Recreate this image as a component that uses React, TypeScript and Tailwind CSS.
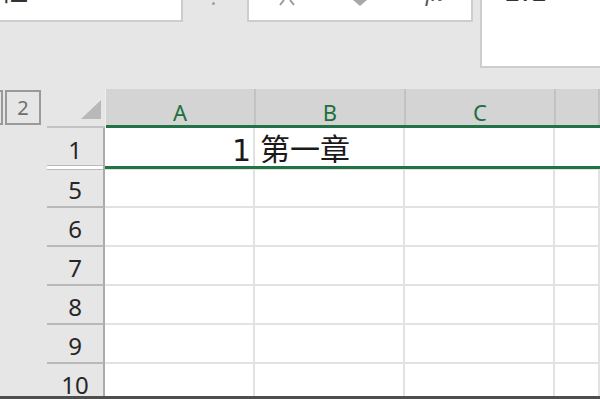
import React from "react";

const columnas = [
  { letra: "A", ancho: "w-[150px]" },
  { letra: "B", ancho: "w-[150px]" },
  { letra: "C", ancho: "w-[150px]" },
  { letra: "", ancho: "flex-1" },
];

const filas = [
  { n: "5", alto: "h-[38px]" },
  { n: "6", alto: "h-[39px]" },
  { n: "7", alto: "h-[39px]" },
  { n: "8", alto: "h-[39px]" },
  { n: "9", alto: "h-[39px]" },
  { n: "10", alto: "h-[39px]" },
];

const fuenteCabecera = { fontFamily: '"Noto Sans", "Open Sans", sans-serif' };
const fuenteCelda = { fontFamily: '"DejaVu Sans", "Noto Sans CJK SC", sans-serif' };

const App: React.FC = () => {
  return (
    <div className="w-[600px] h-[399px] overflow-hidden flex flex-col bg-[#e6e6e6]">
      {/* Barra de fórmulas (cortada arriba) */}
      <div className="h-[89px] shrink-0 flex items-start">
        <div className="w-[183px] h-[22px] bg-white border-r-2 border-b-2 border-[#cdcdcd] overflow-hidden">
          <div
            className="-mt-[25px] text-[28px] leading-[28px] text-[#333]"
            style={{ fontFamily: '"Noto Sans CJK SC", sans-serif' }}
          >
            框
          </div>
        </div>
        <div className="ml-[29px] mt-[2px] w-[3px] h-[3px] rounded-full bg-[#a0a0a0]" />
        <div className="ml-[32px] w-[226px] h-[22px] bg-white border-x-2 border-b-2 border-[#cdcdcd] overflow-hidden flex items-start">
          <svg width="16" height="6" viewBox="0 0 16 6" className="ml-[30px]">
            <path d="M5 0 L1 5 M11 0 L15 5" stroke="#9a9a9a" strokeWidth="2" fill="none" />
          </svg>
          <svg width="18" height="7" viewBox="0 0 18 7" className="ml-[56px]">
            <path d="M2 0 L9 6 L16 0 Z" fill="#a8a8a8" />
          </svg>
          <div
            className="ml-[56px] -mt-[20px] text-[24px] leading-[26px] italic text-[#555]"
            style={{ fontFamily: '"Liberation Serif", serif' }}
          >
            fx
          </div>
        </div>
        <div className="ml-[7px] flex-1 h-[68px] bg-white border-l-2 border-b-2 border-[#cdcdcd] overflow-hidden">
          <div className="ml-[21px] -mt-[22px] text-[28px] leading-[28px] text-[#333]" style={fuenteCelda}>
            1.1
          </div>
        </div>
      </div>

      {/* Cabecera de columnas */}
      <div className="h-[39px] shrink-0 flex">
        <div className="w-[47px] flex items-start pt-[1px]">
          <div className="w-[3px] h-[35px] border-y-2 border-r-2 border-[#9a9a9a]" />
          <div
            className="ml-[2px] w-[36px] h-[35px] border-2 border-[#9a9a9a] flex items-center justify-center text-[20px] text-[#6e6e6e]"
            style={fuenteCabecera}
          >
            2
          </div>
        </div>
        <div className="w-[58px] border-b-2 border-[#c2c2c2] flex items-end justify-end pr-[4px] pb-[7px]">
          <svg width="20" height="19" viewBox="0 0 20 19">
            <path d="M20 0 L20 19 L0 19 Z" fill="#b8b8b8" />
          </svg>
        </div>
        <div className="flex-1 flex flex-col border-l border-[#efefef]">
          <div className="h-[36px] flex bg-[#d4d4d4]">
            {columnas.map((c, i) => (
              <div
                key={i}
                className={`${c.ancho} border-r-2 border-[#c2c2c2] flex items-end justify-center pb-[2px] text-[22px] leading-none text-[#20703f]`}
                style={fuenteCabecera}
              >
                {c.letra}
              </div>
            ))}
          </div>
          <div className="h-[3px] bg-[#217346]" />
        </div>
      </div>

      {/* Fila 1 seleccionada */}
      <div className="h-[42px] shrink-0 flex">
        <div className="w-[47px]" />
        <div className="w-[58px] flex flex-col border-r-2 border-[#ababab]">
          <div
            className="h-[37px] flex items-end justify-center pb-[3px] text-[24px] leading-none text-[#262626]"
            style={fuenteCabecera}
          >
            1
          </div>
          <div className="h-[5px] border-y border-[#b9b9b9] bg-white" />
        </div>
        <div className="flex-1 flex flex-col bg-white">
          <div className="h-[38px] flex">
            <div
              className="w-[150px] border-r-2 border-[#e2e2e2] flex items-end justify-end pr-[2px] text-[30px] leading-none text-[#1a1a1a]"
              style={fuenteCelda}
            >
              1
            </div>
            <div
              className="w-[150px] border-r-2 border-[#e2e2e2] flex items-end pl-[5px] pb-[1px] text-[30px] leading-none text-[#1a1a1a] whitespace-nowrap"
              style={fuenteCelda}
            >
              第一章
            </div>
            <div className="w-[150px] border-r-2 border-[#e2e2e2]" />
            <div className="flex-1" />
          </div>
          <div className="h-[3px] bg-[#217346]" />
          <div className="h-[1px] bg-[#e2e2e2]" />
        </div>
      </div>

      {/* Resto de filas */}
      <div className="flex-1 overflow-hidden flex flex-col">
        {filas.map((f) => (
          <div key={f.n} className={`${f.alto} shrink-0 flex`}>
            <div className="w-[47px]" />
            <div
              className="w-[58px] border-r-2 border-b-2 border-[#b9b9b9] border-r-[#ababab] flex items-end justify-center pb-[4px] text-[24px] leading-none text-[#262626]"
              style={fuenteCabecera}
            >
              {f.n}
            </div>
            <div className="flex-1 flex bg-white">
              {columnas.map((c, i) => (
                <div key={i} className={`${c.ancho} border-r-2 border-b-2 border-[#e2e2e2]`} />
              ))}
            </div>
          </div>
        ))}
      </div>

      <div className="h-[3px] shrink-0 bg-[#4e4e4e]" />
    </div>
  );
};

export default App;
